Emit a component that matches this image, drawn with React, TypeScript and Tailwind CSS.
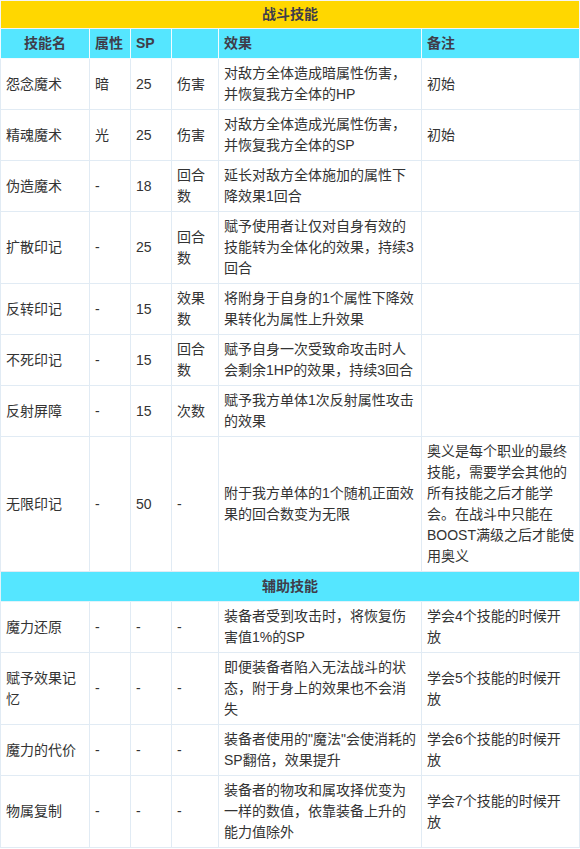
import React from "react";

type Row = {
  name: string[];
  attr: string;
  sp: string;
  kind: string[];
  effect: string[];
  note: string[];
};

const ZHANDOU: Row[] = [
  { name: ["怨念魔术"], attr: "暗", sp: "25", kind: ["伤害"], effect: ["对敌方全体造成暗属性伤害，", "并恢复我方全体的HP"], note: ["初始"] },
  { name: ["精魂魔术"], attr: "光", sp: "25", kind: ["伤害"], effect: ["对敌方全体造成光属性伤害，", "并恢复我方全体的SP"], note: ["初始"] },
  { name: ["伪造魔术"], attr: "-", sp: "18", kind: ["回合", "数"], effect: ["延长对敌方全体施加的属性下", "降效果1回合"], note: [] },
  { name: ["扩散印记"], attr: "-", sp: "25", kind: ["回合", "数"], effect: ["赋予使用者让仅对自身有效的", "技能转为全体化的效果，持续3", "回合"], note: [] },
  { name: ["反转印记"], attr: "-", sp: "15", kind: ["效果", "数"], effect: ["将附身于自身的1个属性下降效", "果转化为属性上升效果"], note: [] },
  { name: ["不死印记"], attr: "-", sp: "15", kind: ["回合", "数"], effect: ["赋予自身一次受致命攻击时人", "会剩余1HP的效果，持续3回合"], note: [] },
  { name: ["反射屏障"], attr: "-", sp: "15", kind: ["次数"], effect: ["赋予我方单体1次反射属性攻击", "的效果"], note: [] },
  {
    name: ["无限印记"], attr: "-", sp: "50", kind: ["-"],
    effect: ["附于我方单体的1个随机正面效", "果的回合数变为无限"],
    note: ["奥义是每个职业的最终", "技能，需要学会其他的", "所有技能之后才能学", "会。在战斗中只能在", "BOOST满级之后才能使", "用奥义"],
  },
];

const FUZHU: Row[] = [
  { name: ["魔力还原"], attr: "-", sp: "-", kind: ["-"], effect: ["装备者受到攻击时，将恢复伤", "害值1%的SP"], note: ["学会4个技能的时候开", "放"] },
  { name: ["赋予效果记", "忆"], attr: "-", sp: "-", kind: ["-"], effect: ["即便装备者陷入无法战斗的状", "态，附于身上的效果也不会消", "失"], note: ["学会5个技能的时候开", "放"] },
  { name: ["魔力的代价"], attr: "-", sp: "-", kind: ["-"], effect: ["装备者使用的\"魔法\"会使消耗的", "SP翻倍，效果提升"], note: ["学会6个技能的时候开", "放"] },
  { name: ["物属复制"], attr: "-", sp: "-", kind: ["-"], effect: ["装备者的物攻和属攻择优变为", "一样的数值，依靠装备上升的", "能力值除外"], note: ["学会7个技能的时候开", "放"] },
];

function Lines({ lines }: { lines: string[] }) {
  return (
    <>
      {lines.map((l, i) => (
        <div key={i}>{l}</div>
      ))}
    </>
  );
}

const td = "border border-[#e1ebf4] px-[5px] py-[4px] align-middle whitespace-nowrap";
const th = "border border-[#f2fbff] px-[5px] py-[4px] font-bold";

function Zeile({ r }: { r: Row }) {
  return (
    <tr className="bg-white">
      <td className={td}><Lines lines={r.name} /></td>
      <td className={td}>{r.attr}</td>
      <td className={td}>{r.sp}</td>
      <td className={td}><Lines lines={r.kind} /></td>
      <td className={td}><Lines lines={r.effect} /></td>
      <td className={td}><Lines lines={r.note} /></td>
    </tr>
  );
}

export default function App() {
  return (
    <div
      className="w-[580px] min-h-[849px] bg-white text-[14px] leading-[21px] text-[#333]"
      style={{ fontFamily: '"Liberation Sans", "Noto Sans CJK SC", sans-serif' }}
    >
      <table className="table-fixed border-collapse w-[579px]">
        <colgroup>
          <col className="w-[89px]" />
          <col className="w-[41px]" />
          <col className="w-[41px]" />
          <col className="w-[47px]" />
          <col className="w-[203px]" />
          <col className="w-[158px]" />
        </colgroup>
        <tbody>
          {/* 战斗技能 */}
          <tr className="bg-[#ffd700] h-[28px]">
            <td colSpan={6} className="border border-[#f4f4f4] text-center font-bold text-[#3f3d4a] py-0">
              战斗技能
            </td>
          </tr>
          <tr className="bg-[#55e6ff] text-[#3f3d4a]">
            <td className={th + " text-center"}>技能名</td>
            <td className={th + " text-left"}>属性</td>
            <td className={th + " text-left"}>SP</td>
            <td className={th + " text-left"}></td>
            <td className={th + " text-left"}>效果</td>
            <td className={th + " text-left"}>备注</td>
          </tr>
          {ZHANDOU.map((r) => (
            <Zeile key={r.name.join("")} r={r} />
          ))}

          {/* 辅助技能 */}
          <tr className="bg-[#55e6ff] h-[30px]">
            <td colSpan={6} className="border border-[#e1f3fa] text-center font-bold text-[#3f3d4a] py-0">
              辅助技能
            </td>
          </tr>
          {FUZHU.map((r) => (
            <Zeile key={r.name.join("")} r={r} />
          ))}
        </tbody>
      </table>
    </div>
  );
}
